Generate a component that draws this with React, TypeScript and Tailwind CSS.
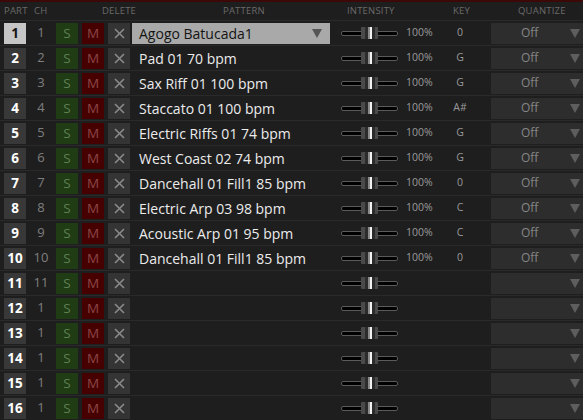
import React from "react"

const ROWS = [
  { part: 1, ch: 1, pattern: "Agogo Batucada1", key: "0", q: "Off" },
  { part: 2, ch: 2, pattern: "Pad 01 70 bpm", key: "G", q: "Off" },
  { part: 3, ch: 3, pattern: "Sax Riff 01 100 bpm", key: "G", q: "Off" },
  { part: 4, ch: 4, pattern: "Staccato 01 100 bpm", key: "A#", q: "Off" },
  { part: 5, ch: 5, pattern: "Electric Riffs 01 74 bpm", key: "G", q: "Off" },
  { part: 6, ch: 6, pattern: "West Coast 02 74 bpm", key: "G", q: "Off" },
  { part: 7, ch: 7, pattern: "Dancehall 01 Fill1 85 bpm", key: "0", q: "Off" },
  { part: 8, ch: 8, pattern: "Electric Arp 03 98 bpm", key: "C", q: "Off" },
  { part: 9, ch: 9, pattern: "Acoustic Arp 01 95 bpm", key: "C", q: "Off" },
  { part: 10, ch: 10, pattern: "Dancehall 01 Fill1 85 bpm", key: "0", q: "Off" },
  { part: 11, ch: 11, pattern: "", key: "", q: "" },
  { part: 12, ch: 1, pattern: "", key: "", q: "" },
  { part: 13, ch: 1, pattern: "", key: "", q: "" },
  { part: 14, ch: 1, pattern: "", key: "", q: "" },
  { part: 15, ch: 1, pattern: "", key: "", q: "" },
  { part: 16, ch: 1, pattern: "", key: "", q: "" },
]

function Triangle({ color }: { color: string }) {
  return (
    <svg width="10" height="9" viewBox="0 0 10 9">
      <path d="M0 0h10L5 9z" fill={color} />
    </svg>
  )
}

function Slider() {
  return (
    <div className="relative ml-[11px] w-[57px] h-[14px] flex items-center shrink-0">
      {/* track */}
      <div className="w-full h-[5px] rounded-[2px] bg-black border border-[#5a5a5a]" />
      {/* thumb: striped metal cap */}
      <div className="absolute left-[20px] top-[1px] w-[17px] h-[12px] flex rounded-[1px] overflow-hidden">
        <div className="w-[4px] bg-[#4a4a4a]" />
        <div className="w-[3px] bg-[#2c2c2c]" />
        <div className="w-[2px] bg-[#8a8a8a]" />
        <div className="w-[2px] bg-[#f2f2f2]" />
        <div className="w-[3px] bg-[#2c2c2c]" />
        <div className="w-[3px] bg-[#4a4a4a]" />
      </div>
    </div>
  )
}

export default function App() {
  return (
    <div className="w-[583px] h-[420px] overflow-hidden bg-[#1e1e1e] font-['Open_Sans',sans-serif]">
      <div className="h-[2px] bg-[#3c0808]" />
      {/* Header */}
      <div className="h-[18px] flex items-center text-[9.5px] text-[#6a6a6a] tracking-[0.02em]">
        <span className="ml-[4px] w-[30px]">PART</span>
        <span className="w-[68px]">CH</span>
        <span className="w-[121px]">DELETE</span>
        <span className="w-[124px]">PATTERN</span>
        <span className="w-[106px]">INTENSITY</span>
        <span className="w-[65px]">KEY</span>
        <span>QUANTIZE</span>
      </div>

      {ROWS.map((r, i) => {
        const sel = i === 0
        return (
          <div key={r.part} className="h-[25px] flex items-center border-t border-[#2a2a2a]">
            <div
              className={`ml-[4px] w-[22px] h-[21px] flex items-center justify-center text-[13.5px] font-bold ${
                sel ? "bg-[#c6c6c6] text-[#151515]" : "bg-[#383838] text-white"
              }`}
            >
              {r.part}
            </div>
            <div className="w-[30px] text-center text-[13px] text-[#7e7e7e]">{r.ch}</div>
            <div className="w-[22px] h-[21px] flex items-center justify-center bg-[#1f3c15] text-[13.5px] text-[#5f7f52]">S</div>
            <div className="ml-[4px] w-[22px] h-[21px] flex items-center justify-center bg-[#470000] text-[13.5px] text-[#8a4646]">M</div>
            <div className="ml-[4px] w-[22px] h-[21px] flex items-center justify-center bg-[#343434]">
              <svg width="11" height="11" viewBox="0 0 11 11">
                <path d="M1 1l9 9M10 1l-9 9" stroke="#8a8a8a" strokeWidth="1.6" />
              </svg>
            </div>
            <div
              className={`ml-[2px] w-[198px] h-[21px] flex items-center pl-[7px] pr-[8px] text-[14px] ${
                sel ? "bg-[#a9a9a9] text-[#141414]" : "text-[#ececec]"
              }`}
            >
              <span className="flex-1 whitespace-nowrap">{r.pattern}</span>
              {sel && <Triangle color="#555555" />}
            </div>
            <Slider />
            <div className="ml-[8px] w-[36px] text-[10.5px] text-[#9a9a9a]">{r.pattern ? "100%" : ""}</div>
            <div className="w-[36px] text-center text-[10.5px] text-[#9a9a9a]">{r.key}</div>
            <div className="ml-[13px] flex-1 h-[21px] bg-[#2d2d2d] flex items-center pr-[3px]">
              <span className="flex-1 pl-[30px] text-[12px] text-[#858585]">{r.q}</span>
              <Triangle color="#5e5e5e" />
            </div>
          </div>
        )
      })}
    </div>
  )
}
